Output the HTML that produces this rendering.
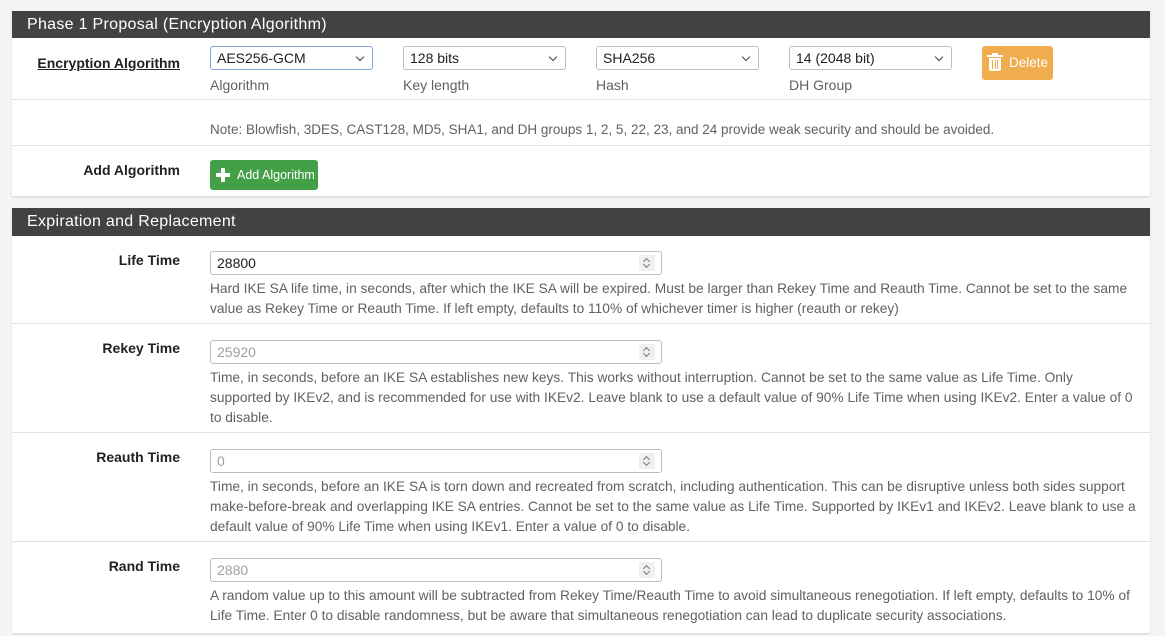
<!DOCTYPE html>
<html><head><style>
*{box-sizing:border-box}
body{margin:0;width:1165px;height:636px;background:#f5f5f5;font-family:"Liberation Sans",sans-serif;font-size:14px;color:#212121;overflow:hidden;position:relative}
.panel{position:absolute;left:12px;width:1138px;background:#fff;box-shadow:0 1px 2px rgba(0,0,0,.15)}
.hd{background:#424242;color:#fff;font-size:16px;letter-spacing:.3px;padding:0 15px;height:27px;line-height:27px}
.row{position:relative;border-bottom:1px solid #e0e0e0}
.row:last-child{border-bottom:none}
.lbl{position:absolute;right:970px;font-weight:bold;font-size:14px;text-align:right;white-space:nowrap}
.sel{position:absolute;height:24px;border:1px solid #bdbdbd;border-radius:3px;padding:0 6px;line-height:22px;font-size:14px;width:163px}
.sel:after{content:"";position:absolute;right:9px;top:7px;width:5px;height:5px;border-right:1.3px solid #444;border-bottom:1.3px solid #444;transform:rotate(45deg)}
.sub{position:absolute;color:#616161;font-size:14px}
.inp{position:absolute;left:198px;width:452px;height:24px;border:1px solid #bdbdbd;border-radius:3px;padding:0 6px;line-height:22px}
.inp .sp{position:absolute;right:6px;top:3px;width:16px;height:16px;background:#f0f0f0;border-radius:2px}
.inp .sp:before,.inp .sp:after{content:"";position:absolute;left:5px;width:4px;height:4px;border-left:1px solid #777;border-top:1px solid #777}
.inp .sp:before{top:4px;transform:rotate(45deg)}
.inp .sp:after{top:7px;transform:rotate(225deg)}
.help{position:absolute;left:198px;right:8px;color:#616161;line-height:20px;font-size:13.75px}
.ph{color:#9e9e9e}
</style></head><body>
<div class="panel" style="top:11px;height:185px">
<div class="hd">Phase 1 Proposal (Encryption Algorithm)</div>
<div class="row" style="height:62px">
<div class="lbl" style="top:17px;text-decoration:underline">Encryption Algorithm</div>
<div class="sel" style="left:198px;top:8px;border-color:#7aa7d6">AES256-GCM</div>
<div class="sel" style="left:391px;top:8px">128 bits</div>
<div class="sel" style="left:584px;top:8px">SHA256</div>
<div class="sel" style="left:777px;top:8px">14 (2048 bit)</div>
<div class="sub" style="left:198px;top:39px">Algorithm</div>
<div class="sub" style="left:391px;top:39px">Key length</div>
<div class="sub" style="left:584px;top:39px">Hash</div>
<div class="sub" style="left:777px;top:39px">DH Group</div>
<div style="position:absolute;left:970px;top:8px;width:71px;height:34px;background:#f0ad4e;border-radius:3px;color:#fff;line-height:34px;font-size:13.5px"><span style="position:absolute;left:7px;top:12px;width:12px;height:13px;background:#fff;border-radius:0 0 2px 2px"></span><span style="position:absolute;left:5px;top:9px;width:16px;height:2px;background:#fff"></span><span style="position:absolute;left:10px;top:7px;width:6px;height:2px;background:#fff"></span><span style="position:absolute;left:10px;top:14px;width:6px;height:9px;border-left:1px solid #f0ad4e;border-right:1px solid #f0ad4e"></span><span style="position:absolute;left:12.5px;top:14px;width:1px;height:9px;background:#f0ad4e"></span><span style="margin-left:27px">Delete</span></div>
</div>
<div class="row" style="height:46px"><div class="sub" style="left:198px;top:22px;font-size:13.5px">Note: Blowfish, 3DES, CAST128, MD5, SHA1, and DH groups 1, 2, 5, 22, 23, and 24 provide weak security and should be avoided.</div></div>
<div class="row" style="height:50px">
<div class="lbl" style="top:16px">Add Algorithm</div>
<div style="position:absolute;left:198px;top:14px;width:108px;height:30px;background:#43a047;border-radius:3px;color:#fff;font-size:12.5px;line-height:30px"><span style="position:absolute;left:6px;top:8px;width:14px;height:14px"><span style="position:absolute;left:5px;top:0;width:4px;height:14px;background:#fff"></span><span style="position:absolute;left:0;top:5px;width:14px;height:4px;background:#fff"></span></span><span style="margin-left:27px">Add Algorithm</span></div>
</div>
</div>
<div class="panel" style="top:208px;height:425px">
<div class="hd" style="height:28px;line-height:28px">Expiration and Replacement</div>
<div class="row" style="height:88px">
<div class="lbl" style="top:16px">Life Time</div>
<div class="inp" style="top:15px">28800<span class="sp"></span></div>
<div class="help" style="top:43px">Hard IKE SA life time, in seconds, after which the IKE SA will be expired. Must be larger than Rekey Time and Reauth Time. Cannot be set to the same value as Rekey Time or Reauth Time. If left empty, defaults to 110% of whichever timer is higher (reauth or rekey)</div>
</div>
<div class="row" style="height:109px">
<div class="lbl" style="top:16px">Rekey Time</div>
<div class="inp ph" style="top:16px">25920<span class="sp"></span></div>
<div class="help" style="top:44px;right:0;white-space:nowrap">Time, in seconds, before an IKE SA establishes new keys. This works without interruption. Cannot be set to the same value as Life Time. Only<br>supported by IKEv2, and is recommended for use with IKEv2. Leave blank to use a default value of 90% Life Time when using IKEv2. Enter a value of 0<br>to disable.</div>
</div>
<div class="row" style="height:109px">
<div class="lbl" style="top:16px">Reauth Time</div>
<div class="inp ph" style="top:16px">0<span class="sp"></span></div>
<div class="help" style="top:44px">Time, in seconds, before an IKE SA is torn down and recreated from scratch, including authentication. This can be disruptive unless both sides support make-before-break and overlapping IKE SA entries. Cannot be set to the same value as Life Time. Supported by IKEv1 and IKEv2. Leave blank to use a default value of 90% Life Time when using IKEv1. Enter a value of 0 to disable.</div>
</div>
<div class="row" style="height:90px">
<div class="lbl" style="top:16px">Rand Time</div>
<div class="inp ph" style="top:16px">2880<span class="sp"></span></div>
<div class="help" style="top:44px">A random value up to this amount will be subtracted from Rekey Time/Reauth Time to avoid simultaneous renegotiation. If left empty, defaults to 10% of Life Time. Enter 0 to disable randomness, but be aware that simultaneous renegotiation can lead to duplicate security associations.</div>
</div>
</div>
</body></html>
